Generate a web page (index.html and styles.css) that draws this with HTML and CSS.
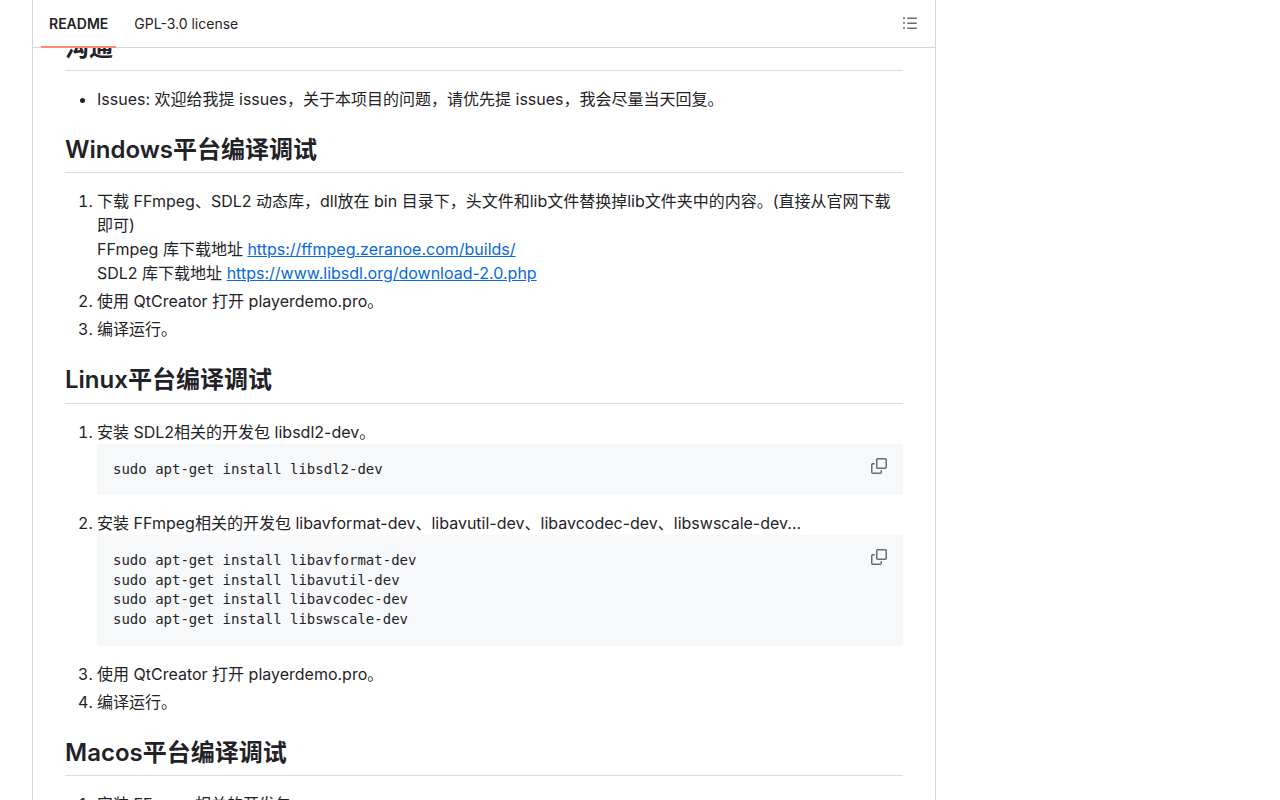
FILE: index.html
```html
<!DOCTYPE html>
<html lang="zh-CN">
<head>
    <meta charset="UTF-8">
    <meta name="viewport" content="width=device-width, initial-scale=1.0">
    <title>README</title>
    <link rel="stylesheet" href="styles.css">
</head>
<body>
    <div class="readme-box">
        <div class="tabs">
            <a class="tab tab-active">README</a>
            <a class="tab">GPL-3.0 license</a>
            <svg class="outline-icon" width="16" height="16" viewBox="0 0 16 16" fill="currentColor"><path d="M5.75 2.5h8.5a.75.75 0 0 1 0 1.5h-8.5a.75.75 0 0 1 0-1.5Zm0 5h8.5a.75.75 0 0 1 0 1.5h-8.5a.75.75 0 0 1 0-1.5Zm0 5h8.5a.75.75 0 0 1 0 1.5h-8.5a.75.75 0 0 1 0-1.5ZM2 14a1 1 0 1 1 0-2 1 1 0 0 1 0 2Zm1-6a1 1 0 1 1-2 0 1 1 0 0 1 2 0ZM2 4a1 1 0 1 1 0-2 1 1 0 0 1 0 2Z"/></svg>
        </div>

        <div class="markdown">
            <h2>沟通</h2>
            <ul>
                <li>Issues: 欢迎给我提 issues，关于本项目的问题，请优先提 issues，我会尽量当天回复。</li>
            </ul>

            <h2>Windows平台编译调试</h2>
            <ol>
                <li>下载 FFmpeg、SDL2 动态库，dll放在 bin 目录下，头文件和lib文件替换掉lib文件夹中的内容。(直接从官网下载即可)<br>
                    FFmpeg 库下载地址 <a href="#">https://ffmpeg.zeranoe.com/builds/</a><br>
                    SDL2 库下载地址 <a href="#">https://www.libsdl.org/download-2.0.php</a></li>
                <li>使用 QtCreator 打开 playerdemo.pro。</li>
                <li>编译运行。</li>
            </ol>

            <h2>Linux平台编译调试</h2>
            <ol>
                <li>安装 SDL2相关的开发包 libsdl2-dev。
                    <div class="code-block">
                        <pre>sudo apt-get install libsdl2-dev</pre>
                        <svg class="copy-icon" width="16" height="16" viewBox="0 0 16 16" fill="currentColor"><path d="M0 6.75C0 5.784.784 5 1.75 5h1.5a.75.75 0 0 1 0 1.5h-1.5a.25.25 0 0 0-.25.25v7.5c0 .138.112.25.25.25h7.5a.25.25 0 0 0 .25-.25v-1.5a.75.75 0 0 1 1.5 0v1.5A1.75 1.75 0 0 1 9.25 16h-7.5A1.75 1.75 0 0 1 0 14.25Z"/><path d="M5 1.75C5 .784 5.784 0 6.75 0h7.5C15.216 0 16 .784 16 1.75v7.5A1.75 1.75 0 0 1 14.25 11h-7.5A1.75 1.75 0 0 1 5 9.25Zm1.75-.25a.25.25 0 0 0-.25.25v7.5c0 .138.112.25.25.25h7.5a.25.25 0 0 0 .25-.25v-7.5a.25.25 0 0 0-.25-.25Z"/></svg>
                    </div>
                </li>
                <li>安装 FFmpeg相关的开发包 libavformat-dev、libavutil-dev、libavcodec-dev、libswscale-dev...
                    <div class="code-block">
                        <pre>sudo apt-get install libavformat-dev
sudo apt-get install libavutil-dev
sudo apt-get install libavcodec-dev
sudo apt-get install libswscale-dev</pre>
                        <svg class="copy-icon" width="16" height="16" viewBox="0 0 16 16" fill="currentColor"><path d="M0 6.75C0 5.784.784 5 1.75 5h1.5a.75.75 0 0 1 0 1.5h-1.5a.25.25 0 0 0-.25.25v7.5c0 .138.112.25.25.25h7.5a.25.25 0 0 0 .25-.25v-1.5a.75.75 0 0 1 1.5 0v1.5A1.75 1.75 0 0 1 9.25 16h-7.5A1.75 1.75 0 0 1 0 14.25Z"/><path d="M5 1.75C5 .784 5.784 0 6.75 0h7.5C15.216 0 16 .784 16 1.75v7.5A1.75 1.75 0 0 1 14.25 11h-7.5A1.75 1.75 0 0 1 5 9.25Zm1.75-.25a.25.25 0 0 0-.25.25v7.5c0 .138.112.25.25.25h7.5a.25.25 0 0 0 .25-.25v-7.5a.25.25 0 0 0-.25-.25Z"/></svg>
                    </div>
                </li>
                <li>使用 QtCreator 打开 playerdemo.pro。</li>
                <li>编译运行。</li>
            </ol>

            <h2>Macos平台编译调试</h2>
            <ol>
                <li>安装 FFmpeg相关的开发包</li>
            </ol>
        </div>
    </div>
</body>
</html>
```

FILE: styles.css
```css
:root {
    --text-primary: #1f2328;
    --text-secondary: #656d76;
    --border: #d0d7de;
    --border-muted: #d8dee4;
    --accent: #0969da;
    --tab-active: #fd8c73;
    --code-bg: #f6f8fa;
}

* {
    box-sizing: border-box;
}

html, body {
    height: 100%;
    overflow: hidden;
}

body {
    margin: 0;
    background-color: #fff;
    color: var(--text-primary);
    font-family: Inter, "Noto Sans CJK SC", sans-serif;
    font-size: 16px;
    line-height: 24px;
}

.readme-box {
    width: 904px;
    margin-left: 32px;
    border-left: 1px solid var(--border);
    border-right: 1px solid var(--border);
}

.tabs {
    position: relative;
    z-index: 1;
    display: flex;
    align-items: center;
    height: 48px;
    padding-left: 8px;
    background-color: #fff;
    border-bottom: 1px solid var(--border);
    font-size: 14px;
}

.tab {
    display: flex;
    align-items: center;
    height: 48px;
    padding: 2px 8px 0;
    margin-right: 10px;
    border-bottom: 2px solid transparent;
}

.tab-active {
    font-weight: 600;
    border-bottom-color: var(--tab-active);
}

.outline-icon {
    margin-left: auto;
    margin-right: 17px;
    margin-top: -1px;
    color: var(--text-secondary);
}

.markdown {
    margin-top: -15px;
    padding: 0 32px;
}

h2 {
    margin: 24px 0 16px;
    padding-bottom: 7.2px;
    border-bottom: 1px solid var(--border-muted);
    font-size: 24px;
    font-weight: 600;
    line-height: 30px;
}

.markdown h2:first-child {
    margin-top: 0;
}

ul, ol {
    margin: 0 0 16px;
    padding-left: 32px;
}

li + li {
    margin-top: 4px;
}

a {
    color: var(--accent);
    text-decoration: underline;
}

.tab {
    color: var(--text-primary);
    text-decoration: none;
}

.code-block {
    position: relative;
    margin-bottom: 16px;
    background-color: var(--code-bg);
}

pre {
    margin: 0;
    padding: 16px;
    font-family: "DejaVu Sans Mono", monospace;
    font-size: 14px;
    line-height: 19.6px;
}

.copy-icon {
    position: absolute;
    top: 14px;
    right: 16px;
    color: var(--text-secondary);
}
```
